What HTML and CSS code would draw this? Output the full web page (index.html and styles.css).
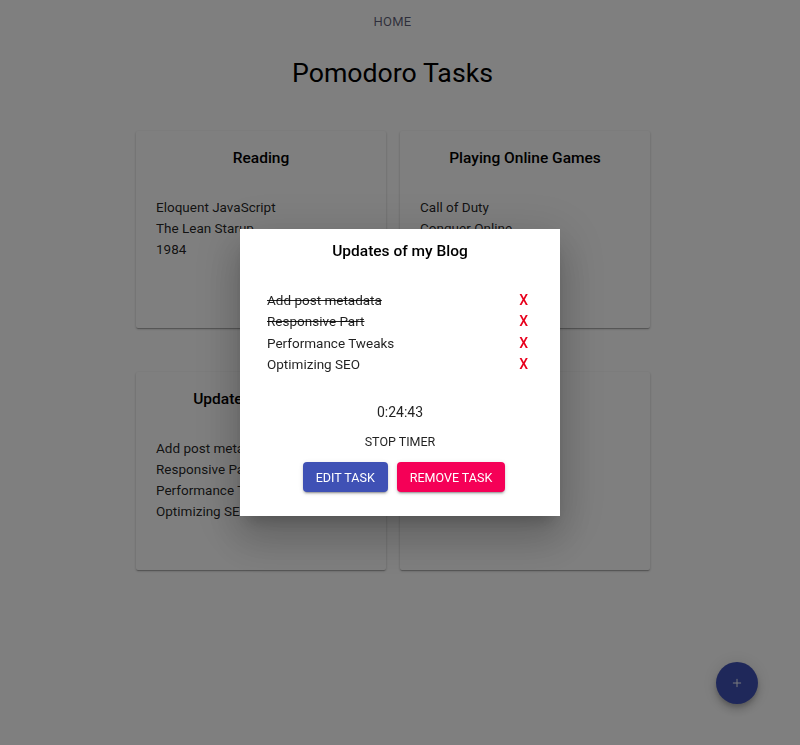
FILE: index.html
```html
<!DOCTYPE html>
<html lang="en">
<head>
<meta charset="utf-8">
<title>Pomodoro Tasks</title>
<link rel="stylesheet" href="styles.css">
</head>
<body>
<div class="page">
  <nav class="nav"><a class="nav-link" href="#">HOME</a></nav>
  <h1 class="page-title">Pomodoro Tasks</h1>
  <main class="grid">
    <section class="card">
      <h2 class="card-title">Reading</h2>
      <ul class="card-list">
        <li>Eloquent JavaScript</li>
        <li>The Lean Starup</li>
        <li>1984</li>
      </ul>
    </section>
    <section class="card">
      <h2 class="card-title">Playing Online Games</h2>
      <ul class="card-list">
        <li>Call of Duty</li>
        <li>Conquer Online</li>
        <li>Dota 2</li>
      </ul>
    </section>
    <section class="card">
      <h2 class="card-title">Updates of my Blog</h2>
      <ul class="card-list">
        <li>Add post metadata</li>
        <li>Responsive Part</li>
        <li>Performance Tweaks</li>
        <li>Optimizing SEO</li>
      </ul>
    </section>
    <section class="card">
      <h2 class="card-title">Learn Go</h2>
      <ul class="card-list">
        <li>Tour of Go</li>
        <li>Concurrency</li>
      </ul>
    </section>
  </main>
</div>

<button class="fab" aria-label="Add task">
  <svg viewBox="0 0 24 24" width="14" height="14"><path d="M12 5v14M5 12h14" stroke="#fff" stroke-width="1.6" fill="none"/></svg>
</button>

<div class="backdrop"></div>

<div class="dialog" role="dialog">
  <h2 class="dialog-title">Updates of my Blog</h2>
  <ul class="task-list">
    <li class="task"><span class="task-name done">Add post metadata</span><span class="task-x">X</span></li>
    <li class="task"><span class="task-name done">Responsive Part</span><span class="task-x">X</span></li>
    <li class="task"><span class="task-name">Performance Tweaks</span><span class="task-x">X</span></li>
    <li class="task"><span class="task-name">Optimizing SEO</span><span class="task-x">X</span></li>
  </ul>
  <div class="timer">0:24:43</div>
  <button class="text-btn">STOP TIMER</button>
  <div class="actions">
    <button class="btn btn-primary">EDIT TASK</button>
    <button class="btn btn-secondary">REMOVE TASK</button>
  </div>
</div>
</body>
</html>
```
FILE: styles.css
```css
* { box-sizing: border-box; }
html, body { margin: 0; padding: 0; }
body {
  font-family: Roboto, "Liberation Sans", Arial, sans-serif;
  color: rgba(0,0,0,0.87);
  background: #fff;
  padding-right: 15px;
  height: 745px;
  overflow: hidden;
}
.page { display: flex; flex-direction: column; align-items: center; }
.nav { padding-top: 11px; height: 30px; }
.nav-link {
  color: rgba(20,20,60,0.7);
  text-decoration: none;
  font-size: 13px;
  letter-spacing: 0.02em;
}
.page-title {
  margin: 26px 0 0;
  font-size: 26.7px;
  font-weight: 400;
  line-height: 34px;
  color: #000;
}
.grid {
  margin-top: 41px;
  padding-left: 1px;
  display: grid;
  grid-template-columns: 250px 250px;
  column-gap: 14px;
  row-gap: 44px;
}
.card {
  background: #fff;
  border-radius: 2px;
  box-shadow: 0 1px 3px rgba(0,0,0,0.2), 0 1px 1px rgba(0,0,0,0.14), 0 2px 1px -1px rgba(0,0,0,0.12);
  padding: 16px 20px 48px;
  min-height: 197px;
}
.card-title {
  margin: 0;
  text-align: center;
  font-size: 15.5px;
  font-weight: 500;
  line-height: 22px;
  color: #000;
}
.card-list {
  list-style: none;
  margin: 28px 0 0;
  padding: 0;
  font-size: 13.5px;
  line-height: 21px;
}
.fab {
  position: fixed;
  right: 42px;
  bottom: 41px;
  width: 42px;
  height: 42px;
  border-radius: 50%;
  border: 0;
  background: #3f51b5;
  display: flex;
  align-items: center;
  justify-content: center;
  box-shadow: 0 3px 5px -1px rgba(0,0,0,0.2), 0 6px 10px 0 rgba(0,0,0,0.14), 0 1px 18px 0 rgba(0,0,0,0.12);
}
.backdrop {
  position: fixed;
  inset: 0;
  background: rgba(0,0,0,0.5);
}
.dialog {
  position: fixed;
  left: 240px;
  top: 229px;
  width: 320px;
  height: 287px;
  background: #fff;
  box-shadow: 0 11px 15px -7px rgba(0,0,0,0.2), 0 24px 38px 3px rgba(0,0,0,0.14), 0 9px 46px 8px rgba(0,0,0,0.12);
  padding: 11px 0 24px;
  display: flex;
  flex-direction: column;
  align-items: center;
}
.dialog-title {
  margin: 0;
  font-size: 15.5px;
  font-weight: 500;
  line-height: 22px;
  color: #000;
}
.task-list {
  list-style: none;
  margin: 28px 0 0;
  padding: 0 32px 0 27px;
  width: 100%;
  font-size: 13.5px;
  line-height: 21.3px;
}
.task { display: flex; justify-content: space-between; }
.done { text-decoration: line-through; }
.task-x { color: #e8001c; font-size: 14px; font-weight: 500; }
.timer {
  margin-top: 27px;
  font-size: 14px;
  line-height: 20px;
}
.text-btn {
  margin-top: 10px;
  background: none;
  border: 0;
  font-family: inherit;
  font-size: 12.5px;
  color: rgba(0,0,0,0.87);
  padding: 0;
  line-height: 20px;
}
.actions { margin-top: 10px; margin-left: 8px; display: flex; gap: 9px; }
.btn {
  font-family: inherit;
  font-size: 12.5px;
  font-weight: 400;
  border: 0;
  border-radius: 4px;
  height: 30px;
  padding: 0 13px;
  color: #fff;
  box-shadow: 0 3px 1px -2px rgba(0,0,0,0.2), 0 2px 2px 0 rgba(0,0,0,0.14), 0 1px 5px 0 rgba(0,0,0,0.12);
}
.btn-primary { background: #3f51b5; }
.btn-secondary { background: #f50057; }
```
